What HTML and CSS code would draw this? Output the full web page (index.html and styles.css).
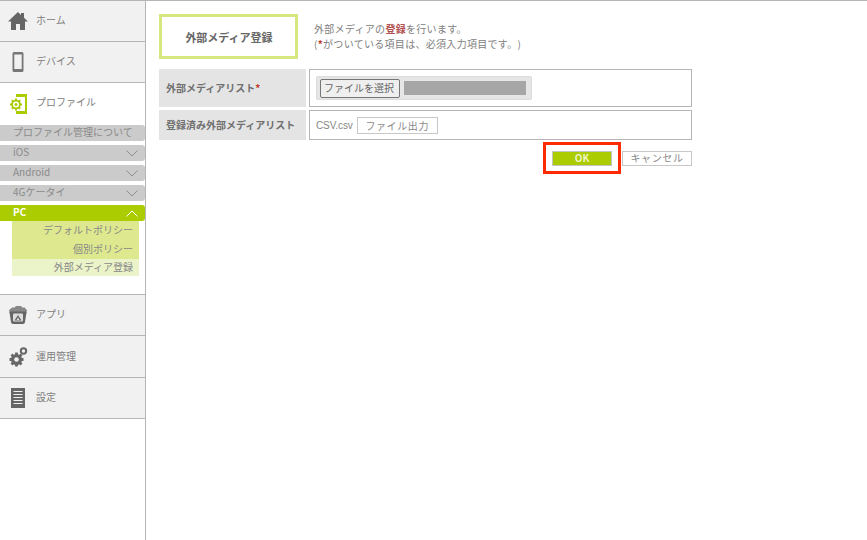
FILE: index.html
```html
<!DOCTYPE html>
<html lang="ja">
<head>
<meta charset="utf-8">
<title>外部メディア登録</title>
<link rel="stylesheet" href="styles.css">
</head>
<body>
<div class="page">
  <nav class="side">
    <a class="nav first"><svg class="ico" viewBox="0 0 20 20"><path d="M10 1 0 10.500h3V19h5v-6h4v6h5v-8.500h3l-4-3.800V2h-3v2z" fill="#666"/></svg><span>ホーム</span></a>
    <a class="nav second"><svg class="ico" viewBox="0 0 20 20"><path fill-rule="evenodd" d="M6 0h8A1.500 1.500 0 0 1 15.500 1.500v17A1.500 1.500 0 0 1 14 20H6a1.500 1.500 0 0 1-1.500-1.500v-17A1.500 1.500 0 0 1 6 0zM6.300 2.500V17h7.400V2.500z" fill="#777"/></svg><span>デバイス</span></a>
    <div class="profile">
      <div class="prof-head"><svg class="ico" viewBox="0 0 20 20"><path fill-rule="evenodd" d="M8 0h11v20H8v-3h9V3H8z" fill="#aacc00"/><path d="M8 4.500v12M2 10.500h12M3.800 6.300l8.400 8.400M12.200 6.300l-8.400 8.400" stroke="#aacc00" stroke-width="2"/><circle cx="8" cy="10.500" r="4.800" fill="#aacc00"/><circle cx="8" cy="10.500" r="3" fill="#fff"/><circle cx="8" cy="10.500" r="1.500" fill="#aacc00"/></svg><span>プロファイル</span></div>
      <ul class="sub">
        <li class="pill">プロファイル管理について</li>
        <li class="pill">iOS<svg class="chev" viewBox="0 0 12 7"><path d="M.5.500 6 6l5.500-5.500" fill="none" stroke="#8f8f8f"/></svg></li>
        <li class="pill">Android<svg class="chev" viewBox="0 0 12 7"><path d="M.5.500 6 6l5.500-5.500" fill="none" stroke="#8f8f8f"/></svg></li>
        <li class="pill">4Gケータイ<svg class="chev" viewBox="0 0 12 7"><path d="M.5.500 6 6l5.500-5.500" fill="none" stroke="#8f8f8f"/></svg></li>
        <li class="pill on">PC<svg class="chev" viewBox="0 0 12 7"><path d="M.5 6.500 6 1l5.500 5.500" fill="none" stroke="#fff"/></svg></li>
      </ul>
      <ul class="kids">
        <li>デフォルトポリシー</li>
        <li>個別ポリシー</li>
        <li class="cur">外部メディア登録</li>
      </ul>
    </div>
    <a class="nav top"><svg class="ico" viewBox="0 0 20 20"><path d="M1 5 5 2l1 1 2-2h5l2 2 1-1 3 3-1 4H2z" fill="#888"/><path d="M2.500 6.500h15q1 0 1 1L17 17q-.2 2-2 2H5q-1.800 0-2-2L1.500 7.500q0-1 1-1z" fill="#666"/><rect x="5" y="8.500" width="10" height="8" rx="1" fill="#ddd"/><path d="M10 10l3.500 5.500h-7z" fill="#666"/><path d="M10 12.500l1.500 2.500h-3z" fill="#ddd"/></svg><span>アプリ</span></a>
    <a class="nav"><svg class="ico" viewBox="0 0 20 20"><path d="M8.500 5.500v14M1.500 12.500h14M3.500 7.500l10 10M13.500 7.500l-10 10" stroke="#666" stroke-width="2.800"/><circle cx="8.500" cy="12.500" r="5.500" fill="#666"/><circle cx="8.500" cy="12.500" r="2.300" fill="#f1f1f1"/><circle cx="15.500" cy="4" r="2.700" fill="none" stroke="#666" stroke-width="2"/></svg><span>運用管理</span></a>
    <a class="nav last"><svg class="ico" viewBox="0 0 20 20"><path fill-rule="evenodd" d="M3 0h14v20H3zM5.500 3v1h9V3zm0 3v1h9V6zm0 3v1h9V9zm0 3v1h9v-1zm0 3v1h9v-1z" fill="#666"/></svg><span>設定</span></a>
  </nav>
  <main class="main">
    <header class="head">
      <h1 class="title">外部メディア登録</h1>
      <p class="lead">外部メディアの<b>登録</b>を行います。<br>(<i>*</i>がついている項目は、必須入力項目です。)</p>
    </header>
    <div class="form">
      <div class="row tall">
        <div class="label">外部メディアリスト<i>*</i></div>
        <div class="val">
          <div class="file"><button class="pick" type="button">ファイルを選択</button><span class="mask"></span></div>
        </div>
      </div>
      <div class="row short">
        <div class="label">登録済み外部メディアリスト</div>
        <div class="val"><span class="csv">CSV.csv</span><button class="out" type="button">ファイル出力</button></div>
      </div>
      <div class="actions">
        <div class="mark"><button class="ok" type="button">OK</button></div>
        <button class="cancel" type="button">キャンセル</button>
      </div>
    </div>
  </main>
</div>
</body>
</html>
```
FILE: styles.css
```css
* { box-sizing: border-box; }
html, body { margin: 0; height: 100%; }
body { font-family: "Noto Sans CJK JP", "Liberation Sans", sans-serif; font-size: 10px; color: #808080; background: #fff; overflow: hidden; text-spacing-trim: space-all; }
.page { display: flex; height: 540px; border-top: 1px solid #b5b5b5; }
.side { width: 146px; flex: none; border-right: 1px solid #b5b5b5; }
.nav { display: flex; align-items: center; height: 42px; background: #f1f1f1; border-bottom: 1px solid #b5b5b5; padding-left: 8px; gap: 8px; }
.nav.first { height: 41px; }
.nav.second { height: 41px; }
.nav.last { height: 41px; }
.nav.top { border-top: 1px solid #b5b5b5; height: 42px; }
.ico { width: 20px; height: 20px; flex: none; }
.nav span { line-height: 14px; padding-bottom: 2px; }
.prof-head span { line-height: 14px; padding-bottom: 4px; }
.profile { height: 211px; }
.prof-head { display: flex; align-items: center; height: 42px; padding-left: 8px; gap: 8px; }
.sub { list-style: none; margin: 0; padding: 0; display: flex; flex-direction: column; gap: 4px; }
.pill { display: flex; align-items: center; justify-content: space-between; height: 16px; background: #cbcbcb; border-radius: 0 3px 3px 0; padding: 0 7px 2px 13px; color: #8a8a8a; line-height: 14px; white-space: nowrap; }
.pill.on { background: #aacc00; color: #fff; font-weight: 700; }
.chev { width: 12px; height: 7px; flex: none; margin-top: 2px; }
.kids { list-style: none; margin: 0 6px 0 12px; padding: 0; background: #dde88f; }
.kids li { height: 19px; line-height: 17px; text-align: right; padding-right: 6px; color: #888; }
.kids li.cur { height: 17px; line-height: 16px; background: #ebf3c9; }
.main { flex: 1; padding: 13px 0 0 13px; }
.head { display: flex; align-items: center; gap: 16px; }
.title { width: 139px; height: 45px; margin: 0; border: 3px solid #d8e67f; font-size: 11px; font-weight: 700; color: #666; display: flex; align-items: center; justify-content: center; padding-left: 1px; }
.lead { margin: 0; line-height: 15px; padding-bottom: 2px; color: #808080; letter-spacing: .3px; }
.lead b { color: #b25050; font-weight: 700; }
.lead i, .label i { color: #c0392b; font-style: normal; font-weight: 700; }
.form { width: 533px; margin-top: 10px; }
.row { display: flex; gap: 3px; margin-bottom: 3px; }
.row.tall { height: 38px; }
.row.short { height: 30px; margin-bottom: 2px; }
.label { width: 147px; flex: none; background: #e4e4e4; display: flex; align-items: center; padding: 0 0 2px 7px; font-weight: 700; color: #707070; white-space: nowrap; }
.val { flex: 1; border: 1px solid #b5b5b5; display: flex; align-items: center; padding-left: 6px; }
.file { display: flex; align-items: center; width: 216px; height: 24px; background: #e6e6e6; border: 1px solid #dcdcdc; border-radius: 2px; padding-left: 3px; gap: 4px; }
.pick { height: 19px; width: 80px; padding: 0 2px 2px 0; font: inherit; color: #666; background: #efefef; border: 1px solid #767676; border-radius: 2px; }
.mask { width: 122px; height: 14px; background: #a6a6a6; }
.csv { color: #888; font-family: "Liberation Sans", sans-serif; letter-spacing: -.1px; margin-right: 4px; }
.out, .cancel { font: inherit; color: #888; background: #fff; border: 1px solid #c8c8c8; letter-spacing: .6px; padding: 0 0 2px; }
.out { width: 81px; height: 17px; }
.actions { display: flex; justify-content: flex-end; align-items: center; gap: 1px; }
.mark { width: 78px; height: 32px; border: 3px solid #ff2a00; display: flex; align-items: center; justify-content: center; }
.ok { width: 60px; height: 15px; padding: 0 0 2px; font: inherit; font-weight: 700; color: #eef5c5; background: #aacc00; border: 1px solid #c4c4c4; line-height: 12px; }
.cancel { width: 70px; height: 15px; line-height: 12px; }
```
